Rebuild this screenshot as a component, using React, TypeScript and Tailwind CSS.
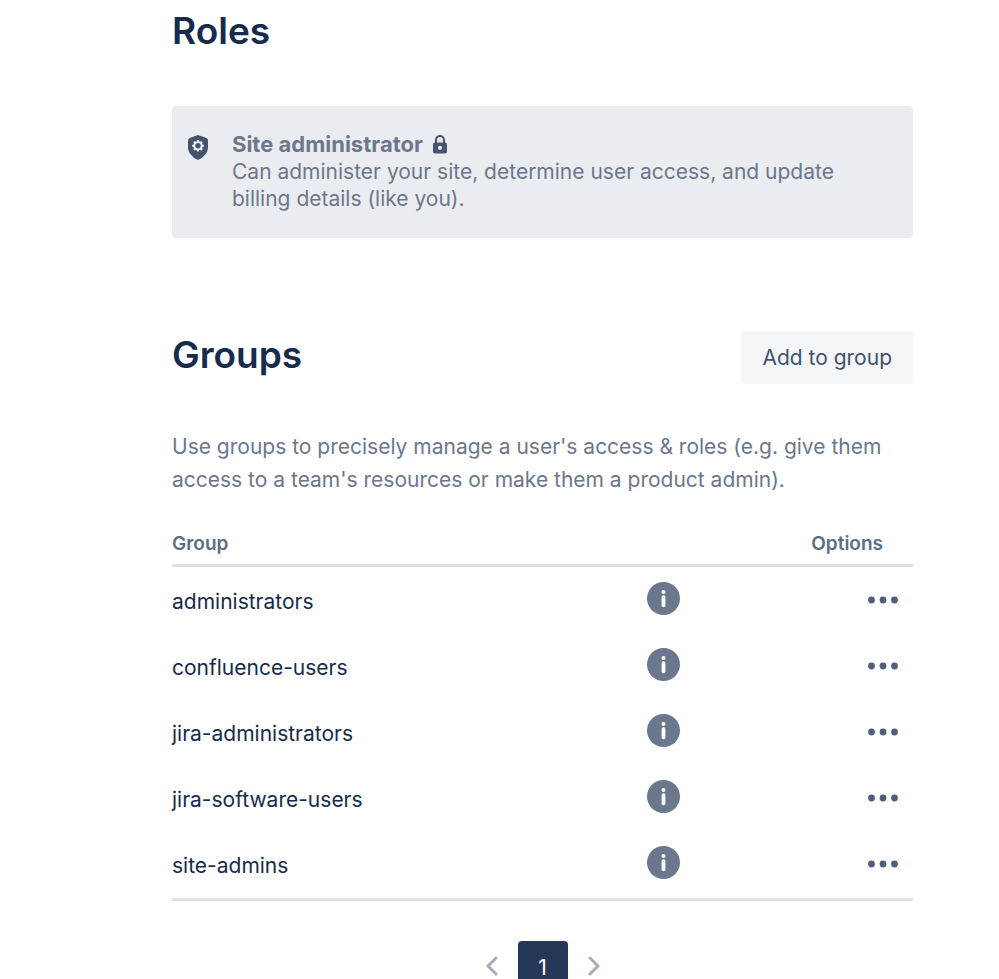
import React from 'react'

const groups = [
  'administrators',
  'confluence-users',
  'jira-administrators',
  'jira-software-users',
  'site-admins'
]

const gearTeeth = [0, 45, 90, 135, 180, 225, 270, 315]

const ShieldIcon = () => (
  <svg viewBox="0 0 20 25" className="h-[25px] w-5" aria-hidden="true">
    <path
      d="M10 0 L18.4 2.9 Q20 3.5 20 5.2 V12.2 C20 18.2 15 22.4 11 24.6 Q10 25.1 9 24.6 C5 22.4 0 18.2 0 12.2 V5.2 Q0 3.5 1.6 2.9 Z"
      fill="#44546f"
    />
    {gearTeeth.map((angle) => (
      <rect key={angle} x="8.9" y="5" width="2.2" height="2.6" rx="0.6" fill="#f4f5f7" transform={`rotate(${angle} 10 10.8)`} />
    ))}
    <circle cx="10" cy="10.8" r="3.7" fill="none" stroke="#f4f5f7" strokeWidth="1.9" />
  </svg>
)

const LockIcon = () => (
  <svg viewBox="0 0 14 19" className="h-[19px] w-[14px]" role="img" aria-label="Locked">
    <path d="M3 9 V5 a4 4 0 0 1 8 0 V9" fill="none" stroke="#44546f" strokeWidth="2" />
    <rect x="0" y="7.6" width="14" height="11" rx="1.8" fill="#44546f" />
    <circle cx="7" cy="12.8" r="2.1" fill="#ebecf0" />
  </svg>
)

const InfoIcon = () => (
  <svg viewBox="0 0 33 33" className="size-[33px]" aria-hidden="true">
    <circle cx="16.5" cy="16.5" r="16.5" fill="#6b778c" />
    <circle cx="16.5" cy="10" r="2" fill="#fff" />
    <rect x="14.6" y="13.2" width="3.8" height="12" rx="1.7" fill="#fff" />
  </svg>
)

const MoreIcon = () => (
  <svg viewBox="0 0 30 8" className="h-2 w-[30px]" aria-hidden="true">
    <circle cx="3.5" cy="4" r="3.4" fill="#505f79" />
    <circle cx="15" cy="4" r="3.4" fill="#505f79" />
    <circle cx="26.5" cy="4" r="3.4" fill="#505f79" />
  </svg>
)

const Chevron: React.FC<{ d: string }> = ({ d }) => (
  <svg viewBox="0 0 12 20" className="h-5 w-3" aria-hidden="true">
    <path d={d} fill="none" stroke="#a5adba" strokeWidth="3" strokeLinecap="round" strokeLinejoin="round" />
  </svg>
)

const App: React.FC = () => {
  return (
    <main className="bg-white pt-2 pr-[86px] pl-[172px] font-['Inter','Liberation_Sans',sans-serif] text-[21px] text-[#172b4d]">
      {/* Roles */}
      <section>
        <h2 className="text-[37px] leading-[46px] font-semibold">Roles</h2>
        <div className="mt-[52px] flex rounded bg-[#ebecf0] px-4 pt-6 pb-[26px] text-[#6b778c]">
          <div className="mr-6 pt-[5px]">
            <ShieldIcon />
          </div>
          <div>
            <h3 className="flex items-center gap-[10px] text-[22px] leading-7 font-bold">
              Site administrator
              <LockIcon />
            </h3>
            <p className="leading-[27px]">
              Can administer your site, determine user access, and update billing details (like you).
            </p>
          </div>
        </div>
      </section>

      {/* Groups */}
      <section className="mt-[93px]">
        <div className="flex items-start justify-between">
          <h2 className="pt-px text-[37px] leading-[46px] font-semibold">Groups</h2>
          <button type="button" className="h-[53px] rounded bg-[#f4f5f7] px-[21px] text-[#42526e] hover:bg-[#ebecf0]">
            Add to group
          </button>
        </div>
        <p className="mt-[46px] leading-[33px] text-[#6b778c]">
          Use groups to precisely manage a user's access &amp; roles (e.g. give them access to a team's resources or make
          them a product admin).
        </p>

        <table className="mt-9 w-full border-separate border-spacing-0 border-b-3 border-[#dfe1e6] pb-px">
          <thead>
            <tr className="text-[19px] leading-6 text-[#5e6c84]">
              <th className="border-b-3 border-[#dfe1e6] pb-2 text-left font-semibold">Group</th>
              <th className="w-[50px] border-b-3 border-[#dfe1e6]" aria-label="Details" />
              <th className="w-[216px] border-b-3 border-[#dfe1e6] pr-[30px] pb-2 text-right font-semibold">Options</th>
            </tr>
          </thead>
          <tbody>
            {groups.map((group) => (
              <tr key={group} className="h-[66px]">
                <td className="pt-[3px]">{group}</td>
                <td>
                  <button type="button" aria-label={`About ${group}`} className="mb-1 block">
                    <InfoIcon />
                  </button>
                </td>
                <td className="pr-[15px]">
                  <button type="button" aria-label={`Options for ${group}`} className="ml-auto block">
                    <MoreIcon />
                  </button>
                </td>
              </tr>
            ))}
          </tbody>
        </table>

        <nav aria-label="Pagination" className="mt-10 flex items-center justify-center gap-5">
          <button type="button" aria-label="Previous page" className="pb-1" disabled>
            <Chevron d="M10 2 L2 10 L10 18" />
          </button>
          <button type="button" aria-current="page" className="h-[53px] w-[50px] rounded bg-[#253858] text-white">
            1
          </button>
          <button type="button" aria-label="Next page" className="pb-1" disabled>
            <Chevron d="M2 2 L10 10 L2 18" />
          </button>
        </nav>
      </section>
    </main>
  )
}

export default App
